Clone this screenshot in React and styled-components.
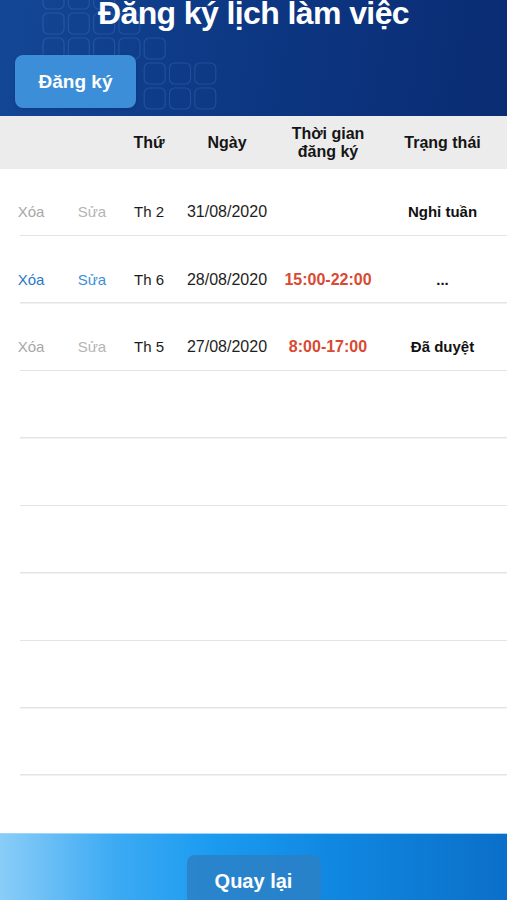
import React from "react";
import styled, { createGlobalStyle } from "styled-components";

const GlobalStyle = createGlobalStyle`
  html, body { margin: 0; padding: 0; background: #ffffff; }
  body { font-family: "Liberation Sans", Arial, sans-serif; overflow: hidden; }
  * { box-sizing: border-box; }
`;

const Page = styled.div`
  width: 507px;
  display: flex;
  flex-direction: column;
`;

const Header = styled.header`
  position: relative;
  height: 116px;
  overflow: hidden;
  padding: 0 15px;
  background: linear-gradient(100deg, #134796 0%, #0d3884 45%, #0a2c73 100%);
  display: flex;
  flex-direction: column;
  align-items: flex-start;
`;

const Pattern = styled.svg`
  position: absolute;
  left: 0;
  top: 0;
  width: 240px;
  height: 116px;
  pointer-events: none;
`;

const Title = styled.h1`
  position: relative;
  align-self: center;
  margin: -3px 0 0;
  font-size: 32px;
  line-height: 32px;
  font-weight: 700;
  letter-spacing: -0.6px;
  color: #ffffff;
  white-space: nowrap;
`;

const RegisterButton = styled.button`
  position: relative;
  margin-top: 26px;
  width: 121px;
  height: 53px;
  border: none;
  border-radius: 8px;
  background: #3b8ed7;
  color: #ffffff;
  font-family: inherit;
  font-size: 19px;
  font-weight: 700;
  box-shadow: 0 1px 3px rgba(0, 0, 0, 0.15);
`;

const COLS = "62px 60px 54px 102px 100px 1fr";

const TableHead = styled.div`
  display: grid;
  grid-template-columns: ${COLS};
  align-items: center;
  height: 53px;
  background: #ececec;
`;

const HeadCell = styled.div`
  text-align: center;
  font-size: 16px;
  line-height: 18px;
  font-weight: 700;
  color: #151515;
  padding-top: 1px;
`;

const Row = styled.div`
  display: grid;
  grid-template-columns: ${COLS};
  align-items: center;
  height: 67.44px;
  padding-top: 33px;
  padding-bottom: 14px;
  background: linear-gradient(#e4e4e4, #e4e4e4) no-repeat 20px 100% / calc(100% - 20px) 1.5px;
`;

const Action = styled.span`
  text-align: center;
  font-size: 15px;
  line-height: 20px;
  color: ${(p) => (p.$active ? p.$blue : p.$gray)};
`;

const Cell = styled.span`
  text-align: center;
  font-size: ${(p) => p.$size || 15}px;
  line-height: 20px;
  font-weight: ${(p) => p.$weight || 400};
  color: ${(p) => p.$color || "#1e1e1e"};
  white-space: nowrap;
`;

const Spacer = styled.div`
  height: 57px;
`;

const Footer = styled.footer`
  height: 110px;
  border-top: 1px solid #9fd6fa;
  background: linear-gradient(90deg, #8acdf8 0%, #3eabf3 22%, #1b9bf0 42%, #1088e2 65%, #0b6fc8 100%);
  display: flex;
  justify-content: center;
  padding-top: 21px;
`;

const BackButton = styled.button`
  width: 134px;
  height: 62px;
  border: none;
  border-radius: 8px;
  background: rgba(44, 128, 198, 0.85);
  color: #ffffff;
  font-family: inherit;
  font-size: 20px;
  font-weight: 700;
  padding-bottom: 10px;
`;

const rows = [
  { active: false, day: "Th 2", date: "31/08/2020", time: "", status: "Nghỉ tuần" },
  { active: true, day: "Th 6", date: "28/08/2020", time: "15:00-22:00", status: "..." },
  { active: false, day: "Th 5", date: "27/08/2020", time: "8:00-17:00", status: "Đã duyệt" },
  null,
  null,
  null,
  null,
  null,
  null,
];

const squares = [
  [0, -12], [1, -12], [2, -12],
  [0, 13], [1, 13], [2, 13], [3, 13],
  [0, 38], [1, 38], [2, 38], [3, 38], [4, 38],
  [4, 63], [5, 63], [6, 63],
  [4, 88], [5, 88], [6, 88],
];

export default function App() {
  return (
    <Page>
      <GlobalStyle />
      <Header>
        <Pattern viewBox="0 0 240 116">
          {squares.map(([c, y], i) => (
            <rect
              key={i}
              x={43 + c * 25.3}
              y={y}
              width={21}
              height={21}
              rx={5}
              fill="none"
              stroke="rgba(110,160,235,0.2)"
              strokeWidth={1.2}
            />
          ))}
        </Pattern>
        <Title>Đăng ký lịch làm việc</Title>
        <RegisterButton>Đăng ký</RegisterButton>
      </Header>
      <TableHead>
        <HeadCell />
        <HeadCell />
        <HeadCell>Thứ</HeadCell>
        <HeadCell>Ngày</HeadCell>
        <HeadCell>
          Thời gian
          <br />
          đăng ký
        </HeadCell>
        <HeadCell>Trạng thái</HeadCell>
      </TableHead>
      {rows.map((r, i) =>
        r ? (
          <Row key={i}>
            <Action $active={r.active} $blue="#2a78c8" $gray="#a8a8a8">Xóa</Action>
            <Action $active={r.active} $blue="#3a8fdb" $gray="#b4b4b4">Sửa</Action>
            <Cell $color="#1c1c1c">{r.day}</Cell>
            <Cell $size={16}>{r.date}</Cell>
            <Cell $size={16} $weight={700} $color="#d84a32">{r.time}</Cell>
            <Cell $weight={700} $color="#111111">{r.status}</Cell>
          </Row>
        ) : (
          <Row key={i} />
        )
      )}
      <Spacer />
      <Footer>
        <BackButton>Quay lại</BackButton>
      </Footer>
    </Page>
  );
}
